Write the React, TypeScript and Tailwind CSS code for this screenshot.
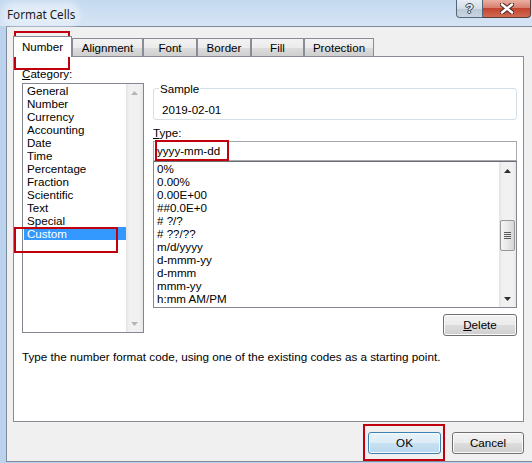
import React from "react";

const CATEGORIES = [
  "General",
  "Number",
  "Currency",
  "Accounting",
  "Date",
  "Time",
  "Percentage",
  "Fraction",
  "Scientific",
  "Text",
  "Special",
  "Custom",
];

const FORMATS = [
  "0%",
  "0.00%",
  "0.00E+00",
  "##0.0E+0",
  "# ?/?",
  "# ??/??",
  "m/d/yyyy",
  "d-mmm-yy",
  "d-mmm",
  "mmm-yy",
  "h:mm AM/PM",
];

const TABS = [
  { label: "Alignment", w: "w-[71px]" },
  { label: "Font", w: "w-[54px]" },
  { label: "Border", w: "w-[54px]" },
  { label: "Fill", w: "w-[53px]" },
  { label: "Protection", w: "w-[70px]" },
];

const BTN =
  "flex items-center justify-center h-[22px] rounded-[3px] border border-[#707070] bg-[linear-gradient(#f2f2f2_0%,#ebebeb_50%,#dddddd_50%,#cfcfcf_100%)] shadow-[inset_0_0_0_1px_#fbfbfb]";

function Arrow({ up, color }: { up?: boolean; color: string }) {
  return (
    <svg width="7" height="4" viewBox="0 0 7 4" className="block">
      <path d={up ? "M0 4 L3.5 0 L7 4 Z" : "M0 0 L3.5 4 L7 0 Z"} fill={color} />
    </svg>
  );
}

function TitleBar() {
  return (
    <div className="h-[26px] flex justify-between bg-[linear-gradient(180deg,#c4d9f0_0%,#cfe0f3_60%,#d6e5f5_100%)]">
      <div className="pl-[7px] pt-[6px]">
        <span className="inline-block leading-[15px] rounded-[10px] bg-[rgba(232,240,249,0.75)] shadow-[0_0_6px_5px_rgba(232,240,249,0.75)] font-['Noto_Sans',sans-serif] text-[11.7px] text-[#1b1b1b]">
          Format Cells
        </span>
      </div>
      <div className="flex h-[18px] mr-px">
        <div className="w-[27px] flex items-center justify-center rounded-bl-[4px] border border-t-0 border-[#55667a] bg-[linear-gradient(180deg,#e7edf3_0%,#d3dde7_50%,#b9c7d5_51%,#c9d5e1_100%)]">
          <span className="font-bold text-[13px] leading-none text-[#e9eef3] [text-shadow:0_0_1px_#3a4655,1px_0_0_#3a4655,-1px_0_0_#3a4655,0_1px_0_#3a4655,0_-1px_0_#3a4655]">
            ?
          </span>
        </div>
        <div className="w-[48px] flex items-center justify-center rounded-br-[4px] border border-l-0 border-t-0 border-[#5c3a35] bg-[linear-gradient(180deg,#eab0a3_0%,#d9806f_45%,#c2442f_50%,#d36a52_100%)]">
          <svg width="14" height="11" viewBox="0 0 14 11">
            <path d="M2 1.5 L12 9.5 M12 1.5 L2 9.5" stroke="#4a2620" strokeWidth="4.6" strokeLinecap="round" />
            <path d="M2 1.5 L12 9.5 M12 1.5 L2 9.5" stroke="#ffffff" strokeWidth="2.6" strokeLinecap="round" />
          </svg>
        </div>
      </div>
    </div>
  );
}

function CategoryList() {
  return (
    <div className="flex h-[250px] w-[122px] border border-[#828790] bg-white">
      <div className="flex-1">
        {CATEGORIES.map((c) => (
          <div
            key={c}
            className={
              c === "Custom"
                ? "ml-px h-[13px] leading-[13px] pl-[3px] bg-[#3399ff] text-white"
                : "ml-px h-[13px] leading-[13px] pl-[3px]"
            }
          >
            {c}
          </div>
        ))}
      </div>
      <div className="w-[17px] flex flex-col justify-between bg-[linear-gradient(90deg,#e3e3e3,#f1f1f1_20%,#f1f1f1_80%,#e6e6e6)]">
        <div className="h-[17px] flex items-center justify-center">
          <Arrow up color="#b5b5b5" />
        </div>
        <div className="h-[17px] flex items-center justify-center">
          <Arrow color="#b5b5b5" />
        </div>
      </div>
    </div>
  );
}

function FormatList() {
  return (
    <div className="flex h-[147px] border border-[#828790] border-t-[#6e6e6e] bg-white">
      <div className="flex-1 pl-[3px]">
        {FORMATS.map((f) => (
          <div key={f} className="h-[13px] leading-[13px]">
            {f}
          </div>
        ))}
      </div>
      <div className="w-[17px] flex flex-col bg-[linear-gradient(90deg,#e3e3e3,#f1f1f1_20%,#f1f1f1_80%,#e6e6e6)]">
        <div className="h-[17px] flex items-center justify-center">
          <Arrow up color="#303030" />
        </div>
        <div className="flex-1 flex flex-col">
          <div className="h-[41px]" />
          <div className="h-[31px] mx-px rounded-[2px] border border-[#979797] bg-[linear-gradient(90deg,#f4f4f4,#e8e8e8_50%,#d6d6d6)] flex flex-col items-center justify-center gap-px">
            <div className="w-[7px] h-px bg-[#5a5a5a]" />
            <div className="w-[7px] h-px bg-[#5a5a5a]" />
            <div className="w-[7px] h-px bg-[#5a5a5a]" />
            <div className="w-[7px] h-px bg-[#5a5a5a]" />
          </div>
        </div>
        <div className="h-[17px] flex items-center justify-center">
          <Arrow color="#303030" />
        </div>
      </div>
    </div>
  );
}

export default function App() {
  return (
    <div className="relative w-[532px] h-[463px] overflow-hidden bg-[#bad2eb] font-['Liberation_Sans',Arial,sans-serif] text-[11.6px] text-black">
      <TitleBar />

      <div className="ml-[6px] h-[436px] border-l border-t border-b border-[#7d8b9c] bg-[#f0f0f0] pl-[6px] pt-[9px]">
        {/* tab strip */}
        <div className="relative z-10 -mb-px flex items-end h-[21px]">
          <div className="w-[59px] h-[21px] flex items-center justify-center border border-b-0 border-[#898c95] bg-white">
            Number
          </div>
          {TABS.map((t) => (
            <div
              key={t.label}
              className={`${t.w} h-[19px] pt-px flex items-center justify-center border border-[#898c95] bg-[linear-gradient(180deg,#f3f3f3_0%,#ebebeb_50%,#dddddd_51%,#cfcfcf_100%)]`}
            >
              {t.label}
            </div>
          ))}
        </div>

        {/* tab panel */}
        <div className="w-[511px] h-[366px] border border-[#898c95] bg-white flex flex-col">
          <div className="flex">
            <div className="ml-[8px] w-[122px] pt-[10px]">
              <div className="leading-[13px]">
                <span className="underline">C</span>ategory:
              </div>
              <div className="mt-[3px]">
                <CategoryList />
              </div>
            </div>

            <div className="ml-[9px] w-[364px] flex flex-col">
              <fieldset className="mt-[25px] h-[38px] rounded-[3px] border border-[#d5dfe5]">
                <legend className="ml-[5px] px-px leading-[13px]">Sample</legend>
                <div className="pl-[8px] pt-[8px] leading-[13px]">2019-02-01</div>
              </fieldset>
              <div className="mt-[6px] leading-[13px]">
                <span className="underline">T</span>ype:
              </div>
              <div className="mt-[2px] h-[20px] border border-[#a5a9b0] bg-white pl-[3px] leading-[18px]">
                yyyy-mm-dd
              </div>
              <FormatList />
              <div className="mt-[6px] flex justify-end">
                <div className={`${BTN} w-[74px]`}>
                  <span>
                    <span className="underline">D</span>elete
                  </span>
                </div>
              </div>
            </div>
          </div>

          <div className="mt-[14px] pl-[8px] leading-[13px] text-[11.7px]">
            Type the number format code, using one of the existing codes as a starting point.
          </div>
        </div>

        {/* dialog buttons */}
        <div className="mt-[10px] w-[511px] flex justify-end gap-[11px]">
          <div className="flex items-center justify-center w-[73px] h-[22px] rounded-[3px] border border-[#3c7fb1] bg-[linear-gradient(#e9f3fa_0%,#dcecf7_50%,#c7e1f2_50%,#b9d8ee_100%)] shadow-[inset_0_0_0_1px_#f4fafd]">
            OK
          </div>
          <div className={`${BTN} w-[72px]`}>Cancel</div>
        </div>
      </div>

      {/* red annotation boxes */}
      <div className="absolute left-[14px] top-[31px] w-[56px] h-[39px] border-2 border-[#c0000c]" />
      <div className="absolute left-[14px] top-[227px] w-[104px] h-[26px] border-2 border-[#c0000c]" />
      <div className="absolute left-[155px] top-[140px] w-[74px] h-[21px] border-2 border-[#c0000c]" />
      <div className="absolute left-[363px] top-[424px] w-[82px] h-[37px] border-2 border-[#c0000c]" />
    </div>
  );
}
